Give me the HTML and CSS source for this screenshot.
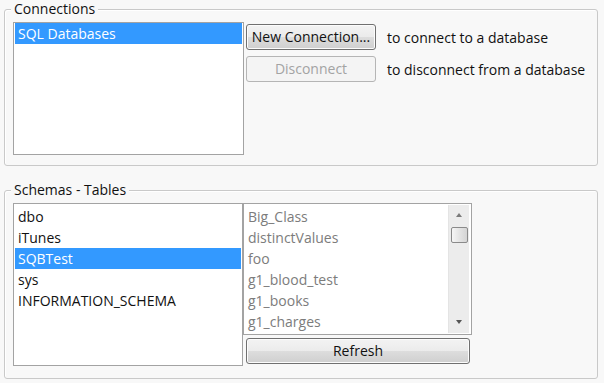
FILE: index.html
```html
<!DOCTYPE html>
<html>
<head>
<meta charset="utf-8">
<link rel="stylesheet" href="styles.css">
</head>
<body>
<div class="page">
  <section class="group group-conn">
    <span class="legend">Connections</span>
    <div class="conn-body">
      <div class="listbox conn-list">
        <div class="row selected">SQL Databases</div>
      </div>
      <div class="actions">
        <div class="action">
          <button class="btn btn-act">New Connection...</button>
          <span class="hint">to connect to a database</span>
        </div>
        <div class="action">
          <button class="btn btn-act" disabled>Disconnect</button>
          <span class="hint">to disconnect from a database</span>
        </div>
      </div>
    </div>
  </section>
  <section class="group group-schema">
    <span class="legend">Schemas - Tables</span>
    <div class="schema-body">
      <div class="listbox schema-list">
        <div class="row">dbo</div>
        <div class="row">iTunes</div>
        <div class="row selected">SQBTest</div>
        <div class="row">sys</div>
        <div class="row">INFORMATION_SCHEMA</div>
      </div>
      <div class="tables-col">
        <div class="listbox table-list">
          <div class="table-items">
            <div class="row">Big_Class</div>
            <div class="row">distinctValues</div>
            <div class="row">foo</div>
            <div class="row">g1_blood_test</div>
            <div class="row">g1_books</div>
            <div class="row">g1_charges</div>
          </div>
          <div class="scrollbar">
            <div class="arrow arrow-up"></div>
            <div class="thumb"></div>
            <div class="track"></div>
            <div class="arrow arrow-down"></div>
          </div>
        </div>
        <button class="btn btn-refresh">Refresh</button>
      </div>
    </div>
  </section>
</div>
</body>
</html>
```
FILE: styles.css
```css
html, body {
  margin: 0;
  padding: 0;
  background: #f8f8f8;
}
body {
  font-family: "Open Sans", "Noto Sans", "Liberation Sans", sans-serif;
  font-size: 14px;
  color: #111;
}
.page {
  width: 604px;
  height: 383px;
  padding: 9px 6px 0 4px;
  box-sizing: border-box;
  display: flex;
  flex-direction: column;
  gap: 24px;
}
.group {
  position: relative;
  border: 1px solid #c9c9c9;
  border-radius: 3px;
  box-shadow: inset 1px 1px 0 #ffffff;
  padding: 12px 8px 0 8px;
  box-sizing: border-box;
}
.group-conn { height: 157px; }
.group-schema { height: 189px; }
.legend {
  position: absolute;
  top: -11px;
  left: 6px;
  padding: 0 3px;
  background: #f8f8f8;
  line-height: 20px;
  color: #111;
}
.listbox {
  background: #fff;
  border: 1px solid #a3a3a3;
  box-sizing: border-box;
  padding: 1px;
}
.row {
  height: 21px;
  line-height: 21px;
  padding-left: 3px;
  white-space: nowrap;
}
.row.selected {
  background: #3399ff;
  color: #fff;
}
.conn-body {
  display: flex;
  gap: 2px;
}
.conn-list {
  width: 231px;
  height: 133px;
  padding: 0 1px;
}
.actions {
  display: flex;
  flex-direction: column;
  gap: 6px;
  padding-top: 2px;
}
.action {
  display: flex;
  align-items: center;
  gap: 11px;
}
.btn {
  font-family: inherit;
  font-size: 14px;
  color: #111;
  height: 26px;
  padding: 0;
  border: 1px solid #707070;
  border-radius: 3px;
  background: linear-gradient(#f3f3f3 0%, #ebebeb 50%, #dddddd 51%, #cfcfcf 100%);
  box-shadow: inset 0 0 0 1px #fcfcfc;
  line-height: 22px;
}
.btn-act {
  width: 130px;
}
.btn:disabled {
  border-color: #b5b5b5;
  background: #f4f4f4;
  color: #a3a3a3;
  box-shadow: none;
}
.hint {
  color: #111;
}
.schema-body {
  display: flex;
  gap: 0;
}
.schema-list {
  width: 230px;
  height: 163px;
  padding: 2px 1px;
}
.tables-col {
  display: flex;
  flex-direction: column;
  gap: 3px;
}
.table-list {
  width: 229px;
  height: 132px;
  display: flex;
  padding: 0;
}
.table-items {
  flex: 1;
  padding-top: 2px;
  color: #7c7c7c;
}
.table-items .row {
  padding-left: 4px;
}
.scrollbar {
  width: 20px;
  margin: 1px 2px 1px 0;
  background: #ececec;
  border-left: 1px solid #e4e4e4;
  display: flex;
  flex-direction: column;
  align-items: center;
}
.arrow {
  width: 0;
  height: 0;
  border-left: 3px solid transparent;
  border-right: 3px solid transparent;
}
.arrow-up {
  margin-top: 8px;
  border-bottom: 4px solid #7a7a7a;
}
.arrow-down {
  margin-bottom: 9px;
  border-top: 4px solid #555;
}
.thumb {
  margin-top: 10px;
  width: 17px;
  height: 16px;
  box-sizing: border-box;
  border: 1px solid #8a8a8a;
  border-radius: 2px;
  background: linear-gradient(90deg, #f6f6f6, #e4e4e4 50%, #d4d4d4);
}
.track {
  flex: 1;
}
.btn-refresh {
  width: 224px;
  margin-left: 3px;
}
```
